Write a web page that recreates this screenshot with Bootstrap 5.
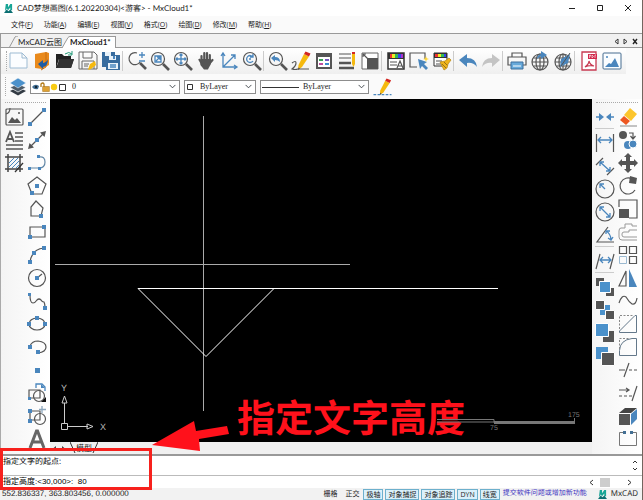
<!DOCTYPE html>
<html lang="zh-CN">
<head>
<meta charset="utf-8">
<meta name="viewport" content="width=device-width, initial-scale=1">
<title>CAD梦想画图</title>
<link rel="stylesheet" href="https://cdn.jsdelivr.net/npm/bootstrap@5.3.0/dist/css/bootstrap.min.css">
<style>
body{font:8px/12px "Open Sans","Noto Sans CJK SC",sans-serif;color:#222;background:#fafafa;text-rendering:geometricPrecision}
button{font:inherit;color:inherit;background:none;border:0;padding:0;white-space:nowrap}
svg{display:block;flex:none}
.app{border-right:1px solid #73655f}
.titlebar{height:16px;background:#fff}
.titlebar,.tabstrip{font-family:Lato,"Noto Sans CJK SC",sans-serif}
.wbtn{width:28px;display:flex;justify-content:center;align-items:center}
.menubar{height:17px;font-size:7px;gap:11px;padding-left:11px}
.grip{border-left:1px dotted #aaa;width:1px}
.tabstrip{height:15px;background:#f1f1f1;border-top:1px solid #999;border-left:1px solid #999;box-shadow:inset 0 -1px #999}
.tab-on{background:#fff;border-top:1px solid #999;border-right:1px solid #999;font-weight:700;height:12px;line-height:11px}
.frame{border-left:1px solid #aaa}
.tools{height:26px}
.tools-in{background:linear-gradient(#fff,#efefef);padding:0 3px 0 5px}
.tb{width:23px;height:23px;display:flex;align-items:center;justify-content:center;flex:none}
.vsep{width:3px;height:20px;border-left:1px solid #ccc}
.hsep{height:3px;width:19px;border-top:1px solid #ccc;margin:0 auto}
.props{height:25px;padding-left:4px;gap:4px}
.combo{position:relative}
.combo .form-select{font:8px/12px "Liberation Serif",serif;padding:0 14px 0 15px;height:14px;min-height:0;border:1px solid #8d8d8d;border-radius:0;background-size:7px;background-position:right 3px center;background-color:#fff;color:#222}
.combo svg{position:absolute;left:2px;top:2px;pointer-events:none}
.combo .lay{padding-left:41px}
.combo .line{padding-left:42px}
.c1{width:150px}.c2{width:72px}.c3{width:109px}
.side{padding-top:6px;background:linear-gradient(90deg,#f4f4f4,#fff)}
.side-l{width:49px;padding-left:1px}
.side-r{width:50px;padding-left:1px}
.dots{position:absolute;top:3px;left:4px;right:4px;border-top:1px dotted #aaa}
.canvas{background:#000;min-height:0}
.canvas svg{overflow:visible;position:relative;z-index:2}
.model{height:12px;background:#f0f0f0;padding-left:2px}
.cmd{border-top:2px solid #999;position:relative;color:#000}
.cmd::after{content:"";position:absolute;left:0;top:-8px;width:152px;height:42px;border:3px solid #f7211d;pointer-events:none}
.hist{height:19px;padding-left:3px}
.cmdrow{height:13px;border-top:1px solid #bbb;padding-left:3px}
.cmdrow input{border:0;outline:0;padding:0;font:8px/12px "Liberation Sans","Noto Sans CJK SC",sans-serif;background:none;color:#000}
.status{height:12px;background:#f2f2f2;font-size:7px;padding:0 4px 0 2px}
.coord{font:8px/12px "Liberation Sans",sans-serif}
.modes{gap:2px}
.tg{border:1px solid #6db0cd;background:#daf0fa;line-height:9px;padding:0 2px;height:11px}
.feedback{color:#3a2fc0;text-decoration:none;margin:0 11px 0 3px}
.brand{font-size:8px}
.d{fill:none;stroke:#555;stroke-width:1.2}
.e{fill:none;stroke:#4a86bd;stroke-width:1.3}
.b{fill:#4a86bd}.g{fill:#555}.y{fill:#f5b90f}
</style>
<script src="https://cdn.jsdelivr.net/npm/bootstrap@5.3.0/dist/js/bootstrap.bundle.min.js"></script>
</head>
<body>
<svg width="0" height="0" class="position-absolute" aria-hidden="true">
<symbol id="lens" viewBox="0 0 20 20"><circle cx="8" cy="8" r="6.5" class="d"/><path d="M13 13l6 6" stroke="#555" stroke-width="2.6"/></symbol>
<symbol id="globe" viewBox="0 0 20 20"><g class="d"><circle cx="10" cy="11" r="8"/><ellipse cx="10" cy="11" rx="4" ry="8"/><path d="M10 3v16M2 11h16M3.500 7h13M3.500 15h13"/></g></symbol>
<symbol id="pencil" viewBox="0 0 20 20"><path d="M13 3l5 2.500-7 10.500-4 3 .5-5z" class="y"/><path d="M13 3l1.500-2.500 5 2L18 5.500z" fill="#d32722"/><path d="M7 19l.3-2.500 1.700 1z" fill="#555"/></symbol>
<symbol id="mx" viewBox="0 0 10 10"><path d="M2 0h2.500v3.500L7 0h2v7H7V4L4.500 7 3 5 1 8z" fill="#18a596"/><path d="M0 10l3-4 2 2 2-2 3 4z" fill="#0b6f72"/></symbol>
</svg>
<div class="app d-flex flex-column vh-100 overflow-hidden">
<header class="titlebar d-flex align-items-center flex-shrink-0">
<svg width="9" height="9" class="ms-1 me-1"><use href="#mx"/></svg>
<span class="flex-grow-1">CAD梦想画图(6.1.20220304)&lt;游客&gt; - MxCloud1*</span>
<button class="wbtn" aria-label="最小化"><svg width="8" height="8"><path d="M1 4.500h6" stroke="#222"/></svg></button>
<button class="wbtn" aria-label="最大化"><svg width="8" height="8"><path d="M1.500 1.500h5v5h-5z" fill="none" stroke="#222"/></svg></button>
<button class="wbtn" aria-label="关闭"><svg width="8" height="8"><path d="M1 1l6 6M7 1L1 7" stroke="#222"/></svg></button>
</header>
<nav class="menubar d-flex align-items-center flex-shrink-0">
<button>文件(<u>F</u>)</button><button>功能(<u>A</u>)</button><button>编辑(<u>E</u>)</button><button>视图(<u>V</u>)</button><button>格式(<u>O</u>)</button><button>绘图(<u>D</u>)</button><button>修改(<u>M</u>)</button><button>帮助(<u>H</u>)</button>
</nav>
<div class="tabstrip d-flex align-items-end flex-shrink-0 ps-2">
<svg width="9" height="12"><path d="M0 12L6 1q1-1 3-1" fill="none" stroke="#999"/></svg>
<button>MxCAD云图</button>
<svg width="8" height="12"><path d="M0 12L6 1q1-.5 2-.5V12z" fill="#fff"/><path d="M0 12L6 1.500q1-1 2-1" fill="none" stroke="#999"/></svg>
<button class="tab-on pe-1">MxCloud1*</button>
<div class="ms-auto d-flex align-self-center gap-1 pe-1">
<button aria-label="上一个"><svg width="5" height="7"><path d="M4 1v5L1 3.500z" fill="none" stroke="#333"/></svg></button>
<button aria-label="下一个"><svg width="5" height="7"><path d="M1 1v5L4 3.500z" fill="none" stroke="#333"/></svg></button>
<button aria-label="关闭标签"><svg width="6" height="7"><path d="M1 1l4 5M5 1L1 6" stroke="#222" stroke-width="1.400"/></svg></button>
</div></div>
<div class="frame flex-shrink-0">
<div class="tools d-flex"><div class="tools-in d-flex align-items-center">
<span class="grip h-75"></span>
<button class="tb" aria-label="新建"><svg width="20" height="20"><path d="M1 2h12l5 5v10H1zM13 2v5h5" fill="#fbfdff" stroke="#9dbbd3"/></svg></button>
<button class="tb" aria-label="打开图纸"><svg width="20" height="20"><path d="M3 3l11-2 3 1v12l-7 4-7-1z" fill="#e98a1c"/><path d="M14 1v15l-5 3" fill="none" stroke="#c96f10"/><path d="M6 13l5-4v3q4-1 5-4 0 7-5 8v2z" fill="#1d5ca4"/></svg></button>
<button class="tb" aria-label="打开"><svg width="20" height="20"><path d="M1 17V3h6l2 2h7v3H4L1 17h15l3-9H5z" fill="#222"/><path d="M4 8h15l-3 9H2z" fill="#333"/><path d="M10 3q4-3 7 0M17 0v4h-4" fill="none" stroke="#249a78"/></svg></button>
<button class="tb" aria-label="保存"><svg width="20" height="20"><path d="M1 1h15l3 3v14H1zM5 1v6h9V1M4 18v-8h12v8M6 13h5M6 15h4" fill="none" stroke="#666"/><path d="M12 13l5-3 1 4-5 4-3 1z" class="y"/></svg></button>
<button class="tb" aria-label="全部保存"><svg width="20" height="20"><path d="M1 1h13v3h5v15H5v-3H1z" fill="#386c9e"/><path d="M4 1h6v4H4zM8 5h7v4H8zM7 12h10v6H7z" fill="#e9f2f9"/><path d="M9 14h6M9 16h6" class="e"/><path d="M12 5h2v3h-2z" class="b"/></svg></button>
<span class="vsep"></span>
<button class="tb" aria-label="缩放"><svg width="20" height="20"><path d="M10 2a6 6 0 1 0 3 9" class="d"/><path d="M13 12l6 6" stroke="#555" stroke-width="2.600"/><path d="M15 1v6M12 4h6M12 10h6" class="e"/></svg></button>
<button class="tb" aria-label="窗口缩放"><svg width="20" height="20"><use href="#lens"/><path d="M5 5h6v6H5zM6 10l4-4M7 6h3v3" class="e"/></svg></button>
<button class="tb" aria-label="范围缩放"><svg width="20" height="20"><use href="#lens"/><path d="M8 3v10M3 8h10M6.500 4.500L8 3l1.500 1.500M6.500 11.500L8 13l1.500-1.500M4.500 6.500L3 8l1.500 1.500M11.500 6.500L13 8l-1.500 1.500" class="e"/></svg></button>
<button class="tb" aria-label="平移"><svg width="20" height="20"><path d="M5.500 11V5M8.300 10V2M11 10V2M13.800 11V4M13 13l3.500-4" stroke="#555" stroke-width="2.200" stroke-linecap="round"/><path d="M4.400 8h10.500v5l-3 5.500H8L4.400 14z" class="g"/><path d="M3 8l4 7" stroke="#555" stroke-width="2"/></svg></button>
<button class="tb" aria-label="坐标"><svg width="20" height="20"><path d="M4 3v13h14M4 16L16 4M2 5l2-3 2 3M15 14l3 2-3 2M12 4h4v4" class="e"/></svg></button>
<button class="tb" aria-label="重生成"><svg width="20" height="20"><use href="#lens"/><path d="M11 6a3.500 3.500 0 1 0 0 4M11 3v3H8" class="e"/><circle cx="8" cy="8" r="1" class="b"/></svg></button>
<span class="vsep"></span>
<button class="tb" aria-label="上一视图"><svg width="20" height="20"><use href="#lens"/><path d="M3 7l4-3v2q5 0 5 5-2-2-5-2v2z" class="b"/></svg></button>
<button class="tb" aria-label="绘制"><svg width="20" height="20"><use href="#pencil"/><path d="M1 12q4-3 4 0t-4 6q3 1 6 0h11" class="d"/></svg></button>
<button class="tb" aria-label="特性"><svg width="20" height="20"><path d="M2 2h16v16H2z" class="g"/><path d="M4 6h12v10H4z" fill="#fff"/><path d="M5 8h4v2H5z" fill="#37a457"/><path d="M11 8h4v2h-4z" fill="#7656bf"/><path d="M5 12h4v2H5z" fill="#be4da0"/><path d="M11 12h4v2h-4z" fill="#3b8ed0"/></svg></button>
<button class="tb" aria-label="线型"><svg width="20" height="20"><path d="M2 3h12M2 7h12" class="d"/><path d="M2 12h12M2 17h15" stroke="#555" stroke-width="2.500"/><path d="M15 3h3v10l-1.500 3-1.500-3z" class="y"/><path d="M15 1h3v2h-3z" fill="#d32722"/></svg></button>
<button class="tb" aria-label="比例"><svg width="20" height="20"><path d="M2 2h16v16H2z" fill="#fff" stroke="#666"/><path d="M7 7h11v11H7z" class="g"/><path d="M3 3l6 6M3 6V3h3" class="d"/></svg></button>
<span class="vsep"></span>
<button class="tb" aria-label="文字样式"><svg width="20" height="20"><path d="M2 2h16v16H2z" fill="#fff" stroke="#333" stroke-width="1.500"/><path d="M2 2h16v6H2z" fill="#333"/><path d="M4 3h3v4H4z" fill="#e33"/><path d="M6 3h3v4H6z" fill="#ee2"/><path d="M9 3h3v4H9z" fill="#3b5"/><path d="M12 3h3v4h-3z" fill="#34e"/><path d="M15 3h2v4h-2z" fill="#a3c"/><path d="M4 11h7M4 14h7M11 17l3-7 3 7M12 15h4" class="d"/></svg></button>
<button class="tb" aria-label="选择"><svg width="20" height="20"><path d="M16 8V2H1v14h7" class="d"/><path d="M9 8l9 3-3 2 4 4-2 2-4-4-2 3z" class="b"/><path d="M17 5l.7 2.300L20 8l-2.300.7L17 11l-.7-2.300L14 8l2.300-.7z" fill="#ffd42e"/></svg></button>
<button class="tb" aria-label="格式刷"><svg width="20" height="20"><path d="M2 2h13v13H2z" fill="#fff" stroke="#333"/><path d="M2 2h13v5H2z" fill="#333"/><path d="M3 3h3v3H3z" fill="#e33"/><path d="M6 3h3v3H6z" fill="#ee2"/><path d="M9 3h3v3H9z" fill="#3b5"/><path d="M12 3h2v3h-2z" fill="#34e"/><path d="M4 10h6M4 13h6" class="d"/><path d="M8 11l5-1 4-3 2 2-3 4-1 4-3 2z" fill="#efb51b" stroke="#b58412" stroke-width=".7"/><path d="M10 13l4 4M12 11l3 3" stroke="#725514" stroke-width=".7"/></svg></button>
<span class="vsep"></span>
<button class="tb" aria-label="撤销"><svg width="20" height="20"><path d="M1 9l8-6v4q9 0 10 9-4-5-10-4v4z" class="b"/></svg></button>
<button class="tb" aria-label="重做"><svg width="20" height="20"><path d="M19 9l-8-6v4Q2 7 1 16q4-5 10-4v4z" fill="#c4c4c4"/></svg></button>
<span class="vsep"></span>
<button class="tb" aria-label="打印"><svg width="20" height="20"><path d="M5 6V2h10v4M4 14H1V6h18v8h-3" class="d" stroke-width="1.500"/><path d="M4 11h12v7H4z" fill="#67a9da" stroke="#3c6f9d"/><path d="M6 15h8" stroke="#fff"/></svg></button>
<button class="tb" aria-label="上传"><svg width="20" height="20"><use href="#globe"/><path d="M7 8q0-4 4-5V0l6 4-6 4V5z" class="b"/></svg></button>
<button class="tb" aria-label="浏览"><svg width="20" height="20"><use href="#globe"/><path d="M17 3L8 8l-1 8 8-4z" class="b"/><path d="M17 2L8 15" stroke="#555"/></svg></button>
<span class="vsep"></span>
<button class="tb" aria-label="输出PDF"><svg width="20" height="20"><path d="M3 1h14v18H3z" fill="#fff" stroke="#c73a51" stroke-width="1.300"/><path d="M9 3h9v5H9z" fill="#d3294c"/><path d="M10.500 7V4h1v1.500M13 4v3l1.500-1.500zM16 7V4h1" stroke="#fff" stroke-width=".6" fill="none"/><path d="M6 16q4-3 4-6 1 4 5 5-5-1-9 1z" fill="none" stroke="#c73a51" stroke-width="1.200"/></svg></button>
<button class="tb" aria-label="图片"><svg width="20" height="20"><rect x="1" y="2" width="18" height="16" rx="1" fill="#fafdff" stroke="#476d90"/><path d="M3 16l4-4 2 1 4-6 4 9z" class="b"/><circle cx="5" cy="6" r="1" class="b"/></svg></button>
</div></div>
<div class="props d-flex align-items-center">
<span class="grip h-75"></span>
<svg width="16" height="18" viewBox="0 0 16 18"><path d="M0 13l8-4 8 4-8 4.500z" fill="#333b44"/><path d="M0 9.500l8-4 8 4L8 14z" fill="#4d5b68" stroke="#fff" stroke-width=".7"/><path d="M0 5l8-5 8 5-8 5z" fill="#4b91cb" stroke="#fff" stroke-width=".5"/></svg>
<div class="combo c1"><select class="form-select lay" aria-label="图层"><option>0</option></select>
<svg width="36" height="10"><path d="M0 5q3-4 7-1l-1 3q-4 1-6-2z" fill="#426f94"/><circle cx="4" cy="5" r="1.200" fill="#123"/><path d="M9 5V2q2-2 3 0v3M11 5h6v4h-6z" fill="none" stroke="#b37a18" stroke-width="1.300"/><path d="M11 5h6v4h-6z" fill="#dca033"/><circle cx="22" cy="5" r="3.200" fill="#f8cb12"/><path d="M27.500 2.500h6v6h-6z" fill="#fff" stroke="#333"/></svg></div>
<div class="combo c2"><select class="form-select" aria-label="颜色"><option>ByLayer</option></select><svg width="10" height="10"><path d="M1.500 2.500h5v5h-5z" fill="#fff" stroke="#333"/></svg></div>
<div class="combo c3"><select class="form-select line" aria-label="线型"><option>ByLayer</option></select><svg width="37" height="10"><path d="M0 5.500h37" stroke="#333"/></svg></div>
<button aria-label="编辑线型"><svg width="19" height="18" viewBox="0 0 20 20"><use href="#pencil"/><path d="M0 18.500h20" stroke="#4a86bd" stroke-width="1.600" stroke-dasharray="3 1.500"/></svg></button>
</div></div>
<div class="frame d-flex flex-grow-1" style="min-height:0">
<aside class="side side-l d-flex align-items-start position-relative flex-shrink-0"><span class="dots"></span>
<div class="d-flex flex-column">
<button class="tb" aria-label="插入图片"><svg width="20" height="20"><rect x="2" y="2" width="17" height="16" rx="1" class="d"/><path d="M4 16l4-6 3 3 2-2 4 5z" class="g"/><circle cx="15" cy="6" r="1" class="g"/><path d="M2 7q4-1 4-6" class="d"/></svg></button>
<button class="tb" aria-label="多行文字"><svg width="20" height="20"><path d="M2 12L6 2l4 10M4 9h5" fill="none" stroke="#555" stroke-width="1.800"/><path d="M11 3h8M11 7h8M11 11h8M2 15h17M2 19h17" stroke="#555" stroke-width="1.500"/></svg></button>
<button class="tb" aria-label="填充"><svg width="20" height="20"><path d="M1 4h18M1 16h18M4 1v18M16 1v18" stroke="#444" stroke-width="1.500"/><path d="M5 10l5-5M5 14l9-9M8 15l7-7M12 15l3-3" fill="none" stroke="#4a86bd"/><path d="M11 19l8-9" stroke="#333" stroke-width="1.300"/></svg></button>
</div>
<div class="d-flex flex-column">
<button class="tb" aria-label="直线"><svg width="20" height="20"><path d="M3 17L17 3" class="d"/><path d="M1 15h4v4H1zM15 1h4v4h-4z" class="b"/></svg></button>
<button class="tb" aria-label="构造线"><svg width="20" height="20"><path d="M3 17L17 3" class="d"/><path d="M1 19l1.500-6L7 17.500zM19 1l-1.500 6L13 2.500z" class="g"/><path d="M8 8h4v4H8z" class="b"/></svg></button>
<button class="tb" aria-label="多段线"><svg width="20" height="20"><path d="M3 15h9q6 0 6-6t-6-5" fill="none" stroke="#6287a6" stroke-width="1.200"/><path d="M1 14h3v3H1zM11 14h3v3h-3zM10 2h3v3h-3z" class="b"/></svg></button>
<button class="tb" aria-label="多边形"><svg width="20" height="20"><path d="M10 1l9 7-4 10H5L1 8z" class="d"/><path d="M8 8h4v4H8zM3 15h4v4H3z" class="b"/></svg></button>
<button class="tb" aria-label="封闭多段线"><svg width="20" height="20"><path d="M9 2l7 7-2 8H4V8z" class="d"/><path d="M12 15h4v4h-4z" class="b"/></svg></button>
<button class="tb" aria-label="矩形"><svg width="20" height="20"><path d="M3 5h15v10H3z" class="d"/><path d="M1 13h4v4H1zM15 3h4v4h-4z" class="b"/></svg></button>
<button class="tb" aria-label="圆弧"><svg width="20" height="20"><path d="M3 17Q5 4 17 3" class="d"/><path d="M1 15h4v4H1zM5 6h4v4H5zM15 1h4v4h-4z" class="b"/></svg></button>
<button class="tb" aria-label="圆"><svg width="20" height="20"><circle cx="10" cy="10" r="8.500" class="d"/><path d="M10 10l5-4" class="d"/><path d="M8 8h4v4H8z" class="b"/></svg></button>
<button class="tb" aria-label="样条曲线"><svg width="20" height="20"><path d="M3 4q0 8 3 8 2 0 4-3 2-2 4 0 1 2 3 2 1 2 1 5" class="d"/><path d="M1 2h3v3H1zM16 15h4v4h-4z" class="b"/></svg></button>
<button class="tb" aria-label="椭圆"><svg width="20" height="20"><ellipse cx="10" cy="10" rx="8" ry="6" class="d"/><path d="M0 8h4v4H0zM8 2h4v4H8zM16 8h4v4h-4z" class="b"/></svg></button>
<button class="tb" aria-label="椭圆弧"><svg width="20" height="20"><path d="M3 9q2-5 8-5 8 1 8 6t-8 6" class="d"/><path d="M1 8h4v4H1zM9 13h4v4H9z" class="b"/></svg></button>
<button class="tb" aria-label="点"><svg width="20" height="20"><path d="M8 8h5v5H8z" class="b"/></svg></button>
<button class="tb" aria-label="插入块"><svg width="20" height="20"><path d="M2 7h11v8H2z" class="d"/><circle cx="12" cy="13" r="5.500" class="d"/><path d="M9 5V1h6l3 3v4" class="e"/><path d="M14 1l4 4h-4zM1 14h3v3H1z" class="b"/><path d="M19 14v5h-5z" fill="#111"/></svg></button>
<button class="tb" aria-label="创建块"><svg width="20" height="20"><path d="M3 5h10v9H3z" class="d"/><circle cx="13" cy="13" r="5.500" class="d"/><path d="M1 3h4v4H1zM1 13h4v4H1z" class="b"/><path d="M15 0v7M12 3.500h7" stroke="#8da7bd" stroke-width="1.300"/></svg></button>
<button class="tb" aria-label="文字"><svg width="20" height="20"><path d="M3 19L9.500 2h1L17 19M6 13h8" fill="none" stroke="#666" stroke-width="3"/></svg></button>
</div></aside>
<main class="d-flex flex-column flex-grow-1" style="min-width:0">
<div class="canvas flex-grow-1">
<svg width="100%" height="100%" viewBox="0 0 542 342" preserveAspectRatio="xMinYMax meet" role="img" aria-label="绘图区">
<g stroke="#aaa" fill="none"><path d="M153.500 16v295M5 164.500h295"/><path d="M88 188.500h360M88 188.500l68 68 68-68" stroke="#fff"/><path d="M14.500 323v-20M18 326.500h20M11.500 323.500h6v6h-6zM14.500 296l-2.500 7h5zM43 326.500l-6-2.500v5z" stroke="#ccc"/></g>
<g fill="#bbb" font-family="Liberation Sans,sans-serif" font-size="9"><text x="11" y="291">Y</text><text x="50" y="330">X</text></g>
<text x="187" y="332" fill="#ff111b" font-family="Noto Sans CJK SC,sans-serif" font-weight="700" font-size="38">指定文字高度</text>
<path d="M387 319.500h57v3M387 322h57" stroke="#777" fill="none"/><path d="M444 321h80v3h-80z" fill="#777"/><path d="M524.500 318v6" stroke="#777"/>
<g fill="#777" font-family="Liberation Sans,sans-serif" font-size="7"><text x="518" y="317">175</text><text x="440" y="330">75</text></g>
<path d="M102 345l42-24 2 10 31-5 2 8-30 5 1 12z" fill="#ff111b"/>
</svg></div>
<div class="model d-flex align-items-center flex-shrink-0 gap-1">
<button aria-label="左移"><svg width="5" height="7"><path d="M4 1v5L1 3.500z" fill="#444"/></svg></button>
<button aria-label="右移"><svg width="5" height="7"><path d="M1 1v5L4 3.500z" fill="#444"/></svg></button>
<button class="d-flex"><svg width="6" height="11"><path d="M0 0l5 11" stroke="#333"/></svg>模型<svg width="6" height="11"><path d="M6 0L1 11" stroke="#333"/></svg></button>
</div></main>
<aside class="side side-r d-flex align-items-start position-relative flex-shrink-0"><span class="dots"></span>
<div class="d-flex flex-column">
<button class="tb" aria-label="打断于点"><svg width="20" height="20"><path d="M1 10h6M13 10h6" class="e"/><path d="M4 6l5 4-5 4zM16 6l-5 4 5 4z" class="b"/></svg></button>
<span class="hsep"></span>
<button class="tb" aria-label="线性标注"><svg width="20" height="20"><path d="M1.500 1v18M18.500 1v18" class="d"/><path d="M3 7h14M6 4L3 7l3 3M14 4l3 3-3 3" class="e"/></svg></button>
<button class="tb" aria-label="对齐标注"><svg width="20" height="20"><path d="M1 9l7-7M12 19l7-7" class="d"/><path d="M5 6l10 9M5 10V6h4M15 11v4h-4" class="e"/></svg></button>
<button class="tb" aria-label="半径标注"><svg width="20" height="20"><circle cx="10" cy="10" r="9" class="d"/><path d="M10 10L5 5M5 9V5h4" class="e"/></svg></button>
<button class="tb" aria-label="直径标注"><svg width="20" height="20"><circle cx="10" cy="10" r="9" class="d"/><path d="M15 15L5 5M5 9V5h4M15 11v4h-4" class="e"/></svg></button>
<button class="tb" aria-label="角度标注"><svg width="20" height="20"><path d="M13 2L2 17h17" class="d"/><path d="M11 6q5 3 5 9M11 9V6h4M13 13l3 2 2-3" class="e"/></svg></button>
<span class="hsep"></span>
<button class="tb" aria-label="倾斜标注"><svg width="20" height="20"><path d="M5 3L1 18M19 3l-4 15" class="d"/><path d="M5 9h11M8 6L5 9l3 3M13 6l3 3-3 3" class="e"/></svg></button>
<span class="hsep"></span>
<button class="tb" aria-label="前置"><svg width="20" height="20"><path d="M1 1h8v8H1zM11 11h8v8h-8z" class="g"/><path d="M4.500 4.500h11v11h-11z" fill="#4a91cb" stroke="#fff"/></svg></button>
<button class="tb" aria-label="后置"><svg width="20" height="20"><path d="M5 5h10v10H5z" fill="#4a91cb"/><path d="M.5.500h9v9h-9zM10.500 10.500h9v9h-9z" fill="#555" stroke="#fff"/></svg></button>
<button class="tb" aria-label="置于对象之上"><svg width="20" height="20"><path d="M8 8h11v11H8z" class="g"/><path d="M.5.500h13v13H.5z" fill="#4a91cb" stroke="#fff"/></svg></button>
<button class="tb" aria-label="置于对象之下"><svg width="20" height="20"><path d="M1 1h12v12H1z" fill="#4a91cb"/><path d="M6.500 6.500h13v13h-13z" fill="#555" stroke="#fff"/></svg></button>
</div>
<div class="d-flex flex-column">
<button class="tb" aria-label="删除"><svg width="20" height="20"><path d="M12 1l7 6-6 7-7-6z" fill="#fcc52d"/><path d="M6 9l6 5-4 4-6-5z" fill="#ed5721"/><path d="M2 19h17" stroke="#888"/></svg></button>
<button class="tb" aria-label="复制"><svg width="20" height="20"><circle cx="5" cy="5" r="4" class="g"/><circle cx="10" cy="15" r="4" class="b"/><circle cx="15" cy="14" r="4" fill="#4a86bd" stroke="#fff"/><path d="M11 3h4v5M12.500 6L15 9l2.500-3" class="d"/></svg></button>
<button class="tb" aria-label="移动"><svg width="20" height="20"><path d="M10 0l4 4h-2v4h4V6l4 4-4 4v-2h-4v4h2l-4 4-4-4h2v-4H4v2l-4-4 4-4v2h4V4H6z" class="g"/></svg></button>
<button class="tb" aria-label="旋转"><svg width="20" height="20"><path d="M17 14A8 8 0 1 1 14 3" class="d"/><path d="M12 0l7 2-1 6-7-1z" class="g"/></svg></button>
<button class="tb" aria-label="缩放对象"><svg width="20" height="20"><path d="M1 8V1h18v18h-8" class="d"/><path d="M1 10h10v9H1z" class="g"/></svg></button>
<button class="tb" aria-label="偏移"><svg width="20" height="20"><path d="M19 4h-5V2H7v4H3q-2 0-2 3v6q0 3 3 3h15M19 8h-8v2H6q-2 0-2 2v1q0 2 2 2h13" fill="none" stroke="#999"/></svg></button>
<button class="tb" aria-label="阵列"><svg width="20" height="20"><path d="M1.500 1.500h7v7h-7zM11.500 1.500h7v7h-7zM11.500 11.500h7v7h-7z" class="d"/><path d="M1.500 11.500h7v7h-7z" fill="none" stroke="#9bb9d0"/></svg></button>
<button class="tb" aria-label="镜像"><svg width="20" height="20"><path d="M8 3v15H1z" class="d"/><path d="M11 1l8 18h-8z" class="b"/></svg></button>
<button class="tb" aria-label="样条"><svg width="20" height="20"><path d="M1 12q3-9 7-6 3 5 6 7 4 1 5-6" class="d"/></svg></button>
<button class="tb" aria-label="倒角"><svg width="20" height="20"><path d="M1.500 18.500V17L17 1.500h1.500v17z" fill="none" stroke="#64788a"/><path d="M1.500 15V1.500H15" fill="none" stroke="#888" stroke-dasharray="2 1.500"/></svg></button>
<button class="tb" aria-label="圆角"><svg width="20" height="20"><path d="M1.500 18.500v-5Q2 3 14 1.500h4.500v17z" fill="none" stroke="#64788a"/><path d="M1.500 12V1.500H12" fill="none" stroke="#888" stroke-dasharray="2 1.500"/></svg></button>
<button class="tb" aria-label="修剪"><svg width="20" height="20"><path d="M1 10h6M11 10h3M16 10h3M11 3L6 17" class="d"/></svg></button>
<button class="tb" aria-label="延伸"><svg width="20" height="20"><path d="M1 7h9M8 5l3 2-3 2M1 13h3M6 13h3M11 13h3M19 3l-5 15" class="d"/></svg></button>
<button class="tb" aria-label="分解"><svg width="20" height="20"><path d="M1 8h11v11H1z" class="g"/><path d="M13 8l6-5v10l-6 6z" class="b"/><path d="M1 7l6-5h12l-6 5z" fill="#444"/></svg></button>
<button class="tb" aria-label="打断"><svg width="20" height="20"><path d="M6 3.500H1.500v13h17v-13H14" fill="none" stroke="#777"/><path d="M5 2h3v3H5zM12 2h3v3h-3z" fill="#426f94"/></svg></button>
</div></aside>
</div>
<section class="cmd flex-shrink-0 bg-white">
<div class="hist d-flex"><span class="flex-grow-1">指定文字的起点:</span>
<div class="d-flex flex-column justify-content-between py-1 pe-1"><button aria-label="向上"><svg width="6" height="4"><path d="M1 3l2-2 2 2" fill="none" stroke="#333"/></svg></button><button aria-label="向下"><svg width="6" height="4"><path d="M1 1l2 2 2-2" fill="none" stroke="#333"/></svg></button></div></div>
<div class="cmdrow d-flex align-items-center"><input class="flex-grow-1" aria-label="命令行" value="指定高度:&lt;30,000&gt;:  80">
<button aria-label="向左"><svg width="8" height="7"><path d="M5 1L2 3.500 5 6" fill="none" stroke="#333"/></svg></button><svg width="10" height="9" class="ms-1"><path d="M0 0h10v9H0z" fill="#cdcdcd"/></svg><button class="ms-3 me-2" aria-label="向右"><svg width="8" height="7"><path d="M2 1l3 2.500L2 6" fill="none" stroke="#333"/></svg></button></div>
</section>
<footer class="status d-flex align-items-center flex-shrink-0">
<span class="coord me-auto">552.836337, 363.803456, 0.000000</span>
<button class="me-2">栅格</button><button class="me-1">正交</button>
<div class="modes d-flex"><button class="tg">极轴</button><button class="tg">对象捕捉</button><button class="tg">对象追踪</button><button class="tg">DYN</button><button class="tg">线宽</button></div>
<a class="feedback" href="#">提交软件问题或增加新功能</a>
<svg width="9" height="9" class="me-1"><use href="#mx"/></svg><span class="brand">MxCAD</span>
</footer>
</div>
</body>
</html>
